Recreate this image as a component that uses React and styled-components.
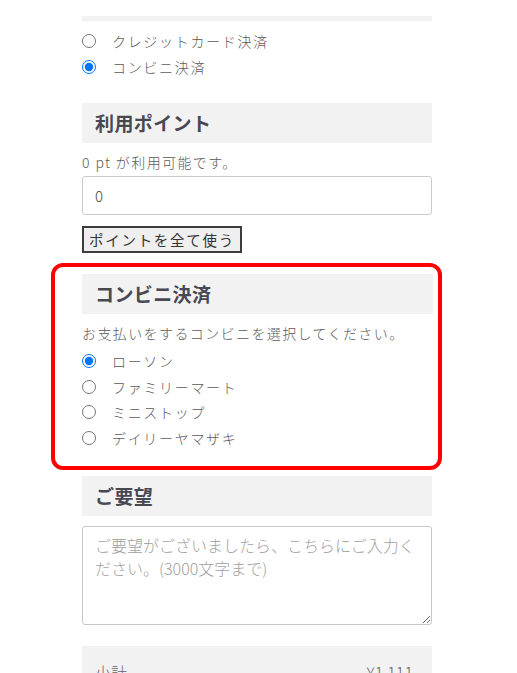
import styled, { createGlobalStyle } from "styled-components";

const GlobalStyle = createGlobalStyle`
  body {
    margin: 0;
    background: #fff;
    font-family: "Noto Sans CJK JP", "Noto Sans", sans-serif;
    font-weight: 300;
    color: #555;
  }
`;

const Page = styled.main`
  width: 350px;
  margin-left: 82px;
  padding-top: 16px;
`;

const EdgeBar = styled.div`
  height: 5px;
  background: #f2f2f2;
`;

const RadioList = styled.div`
  display: flex;
  flex-direction: column;
  margin-top: ${(props) => props.top || "0"};
`;

const RadioRow = styled.label`
  display: flex;
  align-items: center;
  gap: 16px;
  height: ${(props) => props.rowHeight || "26px"};
  font-size: 14px;
  letter-spacing: 0.12em;
  color: #5a5a5a;
`;

const Radio = styled.input.attrs({ type: "radio" })`
  width: 14px;
  height: 14px;
  margin: 0;
  accent-color: #0075ff;
`;

const SectionTitle = styled.h2`
  height: 40px;
  margin: ${(props) => props.top || "0"} 0 0;
  padding-left: 13px;
  background: #f2f2f2;
  font-size: 19px;
  font-weight: 700;
  line-height: 40px;
  letter-spacing: 0.02em;
  color: #484852;
`;

const Note = styled.p`
  margin: 8px 0 ${(props) => props.bottom || "3px"};
  font-size: 14px;
  line-height: 22px;
  letter-spacing: 0.1em;
  color: #5a5a5a;
`;

const PointInput = styled.input`
  box-sizing: border-box;
  display: block;
  width: 100%;
  height: 39px;
  padding: 0 12px;
  border: 1px solid #ccc;
  border-radius: 3px;
  font-family: inherit;
  font-weight: 300;
  font-size: 15px;
  color: #444;
`;

const UseAllButton = styled.button`
  display: block;
  box-sizing: border-box;
  width: 160px;
  height: 27px;
  margin-top: 11px;
  padding: 0;
  border: 2px solid #3c3c3c;
  background: #efefef;
  font-family: inherit;
  font-weight: 400;
  font-size: 14.5px;
  letter-spacing: 0.12em;
  color: #333;
`;

const Highlight = styled.section`
  margin: 10px -10px 0 -31px;
  padding: 7px 5px 15px 27px;
  border: 4px solid #ff0000;
  border-radius: 12px;
`;

const RequestBox = styled.textarea`
  box-sizing: border-box;
  display: block;
  width: 100%;
  height: 99px;
  margin-top: 10px;
  padding: 7px 12px;
  border: 1px solid #c8c8c8;
  border-radius: 3px;
  font-family: inherit;
  font-weight: 300;
  font-size: 16px;
  line-height: 23px;
  color: #444;

  &::placeholder {
    color: #a0a0a0;
  }
`;

const Summary = styled.div`
  display: flex;
  justify-content: space-between;
  margin-top: 21px;
  padding: 14px 19px 14px 13px;
  background: #f2f2f2;
  font-size: 16px;
  color: #666;
`;

const stores = ["ローソン", "ファミリーマート", "ミニストップ", "デイリーヤマザキ"];

function App() {
  return (
    <>
      <GlobalStyle />
      <Page>
        <EdgeBar />
        <RadioList top="7px">
          <RadioRow>
            <Radio name="pay" />
            クレジットカード決済
          </RadioRow>
          <RadioRow>
            <Radio name="pay" defaultChecked />
            コンビニ決済
          </RadioRow>
        </RadioList>

        <SectionTitle top="23px">利用ポイント</SectionTitle>
        <Note>0 pt が利用可能です。</Note>
        <PointInput defaultValue="0" />
        <UseAllButton>ポイントを全て使う</UseAllButton>

        <Highlight>
          <SectionTitle>コンビニ決済</SectionTitle>
          <Note bottom="4px">お支払いをするコンビニを選択してください。</Note>
          <RadioList>
            {stores.map((store, i) => (
              <RadioRow key={store} rowHeight="25.7px">
                <Radio name="store" defaultChecked={i === 0} />
                {store}
              </RadioRow>
            ))}
          </RadioList>
        </Highlight>

        <SectionTitle top="6px">ご要望</SectionTitle>
        <RequestBox placeholder="ご要望がございましたら、こちらにご入力ください。(3000文字まで)" />

        <Summary>
          <span>小計</span>
          <span>¥1,111</span>
        </Summary>
      </Page>
    </>
  );
}

export default App;
